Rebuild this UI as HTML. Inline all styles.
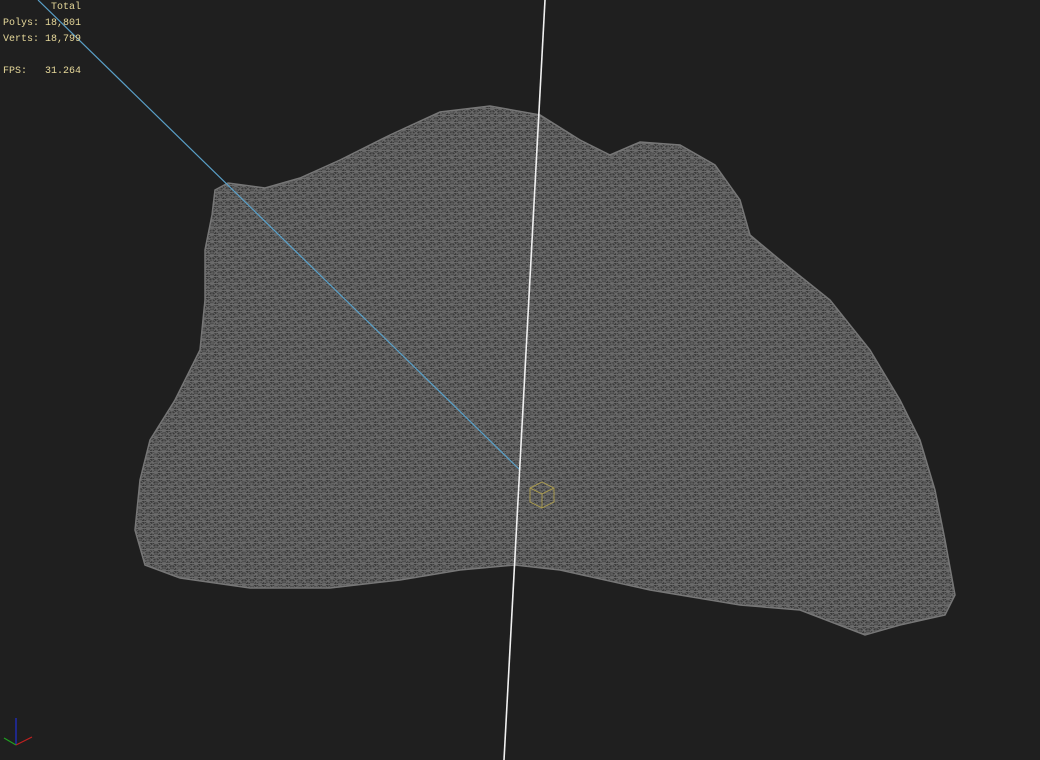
<!DOCTYPE html>
<html><head><meta charset="utf-8"><style>
html,body{margin:0;padding:0;background:#1f1f1f;width:1040px;height:760px;overflow:hidden}
.t{position:absolute;font-family:"Liberation Mono",monospace;font-size:10px;color:#e6d89a;line-height:16px;white-space:pre}
</style></head><body>
<svg width="1040" height="760" style="position:absolute;left:0;top:0">
<defs>
<pattern id="m" width="8" height="7" patternUnits="userSpaceOnUse">
<rect width="8" height="7" fill="#3a3a3a"/>
<path d="M0 0H8M0 3.5H8M0 0L4 3.5L8 0M0 7L4 3.5L8 7M0 0V7M4 0V7" stroke="#6a6a6a" stroke-width="0.9" fill="none"/>
</pattern>
<pattern id="m2" width="13" height="11" patternUnits="userSpaceOnUse" patternTransform="rotate(25)">
<path d="M0 0L13 11M13 0L0 11" stroke="#707070" stroke-width="0.7" fill="none"/>
</pattern>
</defs>
<polygon points="215,190 228,183 265,188 300,178 340,160 390,135 440,112 490,106 540,115 580,140 610,155 640,142 680,145 715,165 740,200 750,235 780,260 830,300 870,350 900,400 920,440 935,490 945,540 955,595 945,615 900,625 865,635 800,610 740,605 650,590 560,570 515,565 460,570 400,580 330,588 250,588 180,578 145,565 135,530 140,480 150,440 175,400 200,350 205,300 205,250 212,215" fill="url(#m)" stroke="#777" stroke-width="1.5"/>
<polygon points="215,190 228,183 265,188 300,178 340,160 390,135 440,112 490,106 540,115 580,140 610,155 640,142 680,145 715,165 740,200 750,235 780,260 830,300 870,350 900,400 920,440 935,490 945,540 955,595 945,615 900,625 865,635 800,610 740,605 650,590 560,570 515,565 460,570 400,580 330,588 250,588 180,578 145,565 135,530 140,480 150,440 175,400 200,350 205,300 205,250 212,215" fill="url(#m2)" opacity="0.6"/>
<line x1="38" y1="0" x2="520" y2="470" stroke="#5aa0c8" stroke-width="1.2"/>
<line x1="545" y1="0" x2="504" y2="760" stroke="#f0f0f0" stroke-width="1.6"/>
<g stroke="#a89a50" fill="none" stroke-width="1"><path d="M530 488l12-6 12 6v14l-12 6-12-6z M530 488l12 6 12-6 M542 494v14"/></g>
<g stroke-width="1.2"><line x1="16" y1="745" x2="16" y2="718" stroke="#2030d0"/><line x1="16" y1="745" x2="32" y2="737" stroke="#c02020"/><line x1="16" y1="745" x2="4" y2="738" stroke="#20a020"/></g>
</svg>
<div class="t" style="left:3px;top:0px">        Total
Polys: 18,801
Verts: 18,799

FPS:   31.264</div>
</body></html>
